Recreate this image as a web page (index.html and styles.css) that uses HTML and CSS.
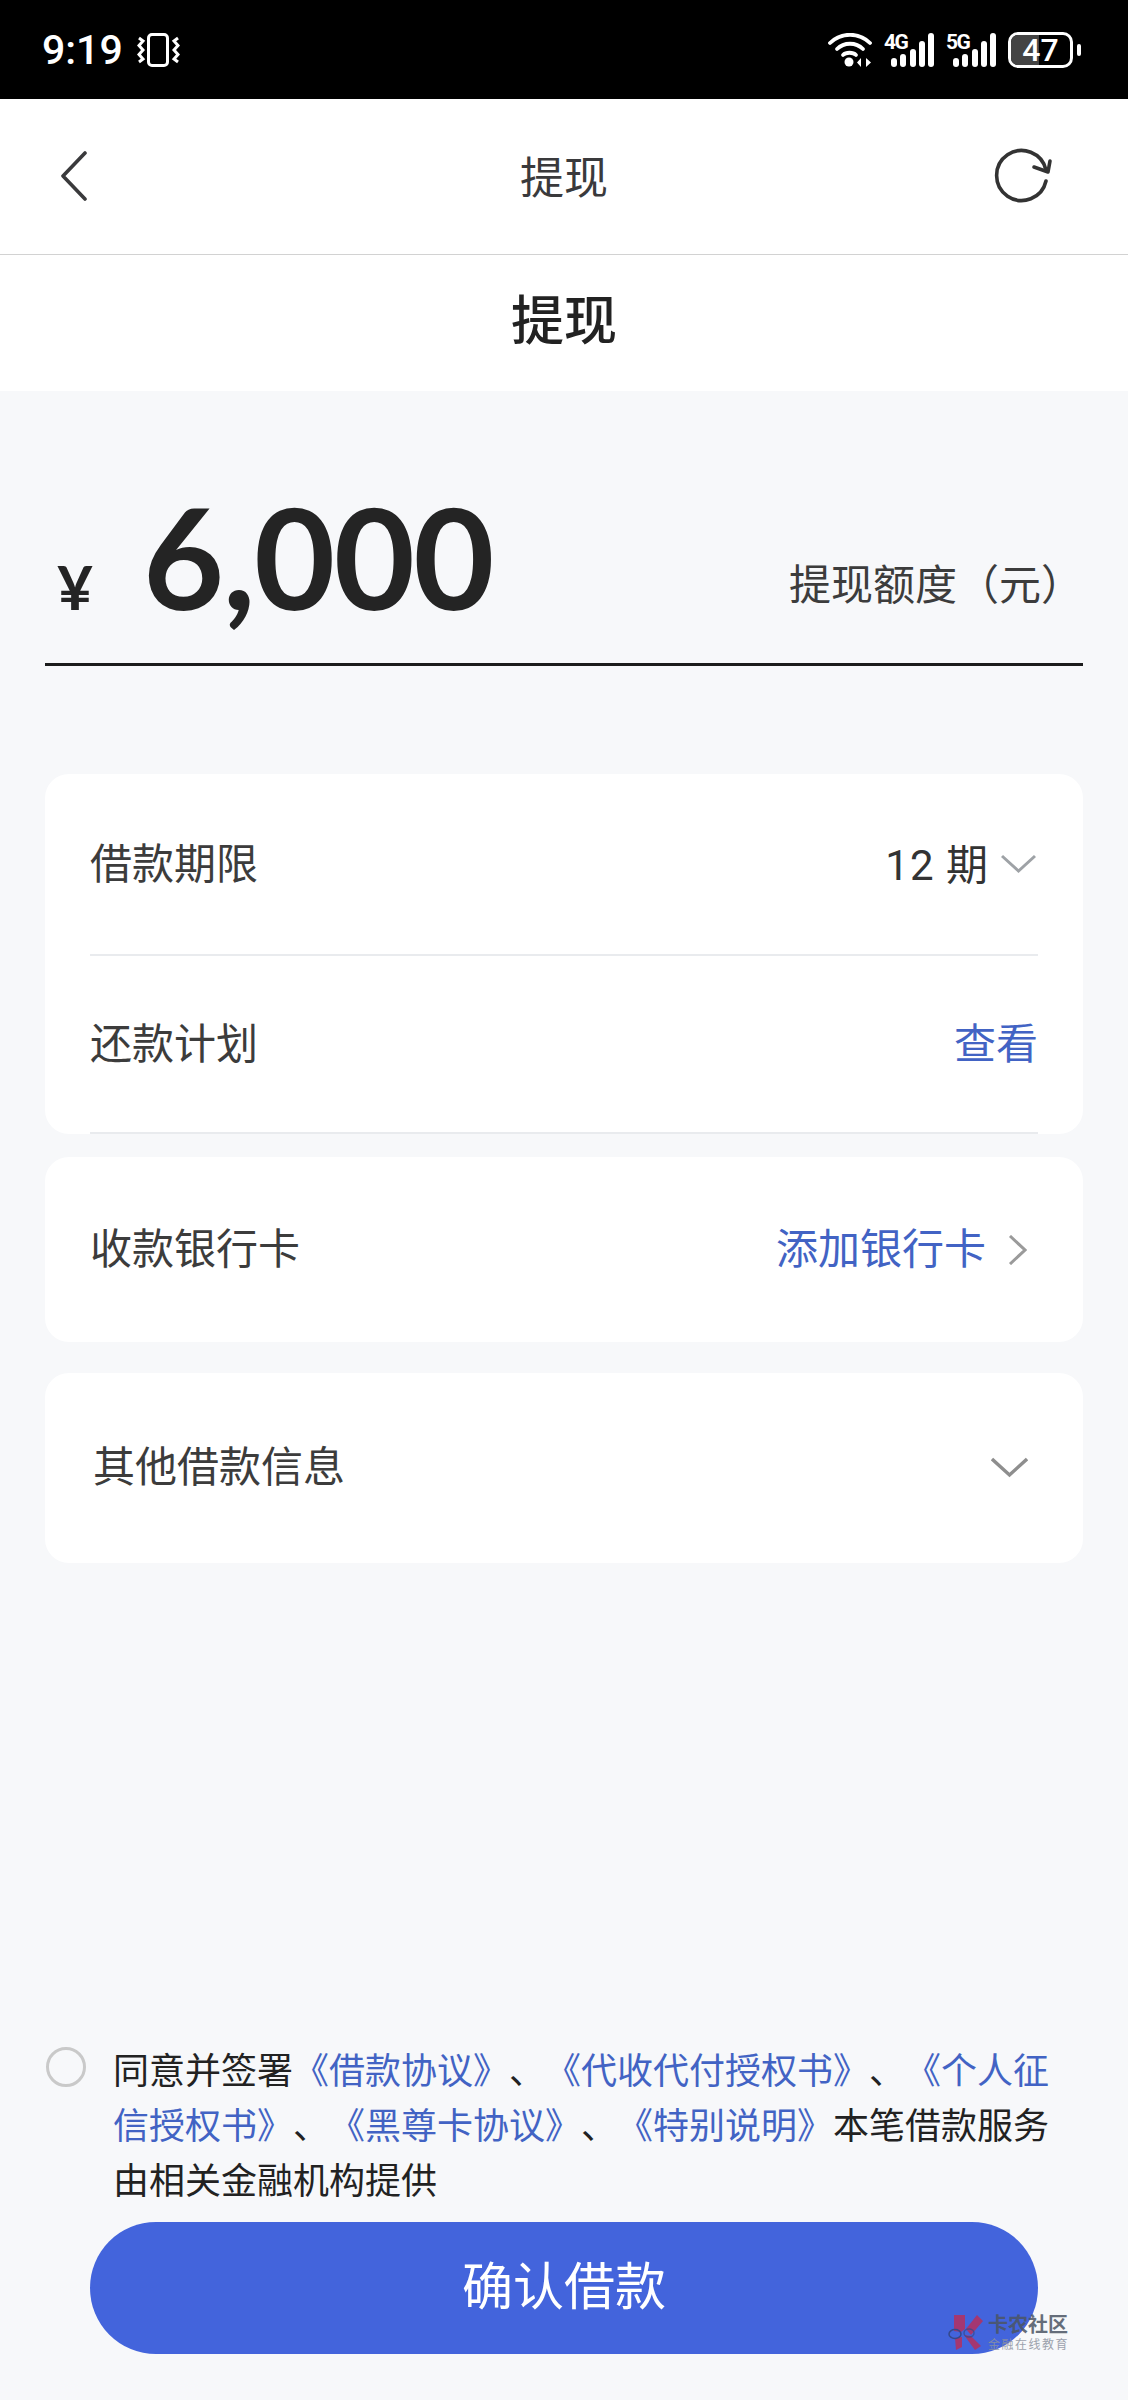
FILE: index.html
```html
<!DOCTYPE html>
<html lang="zh-CN">
<head>
    <meta charset="UTF-8">
    <meta name="viewport" content="width=device-width, initial-scale=1.0">
    <title>提现</title>
    <link rel="stylesheet" href="styles.css">
</head>
<body>
    <div class="page">
        <div class="status-bar">
            <div class="status-left">
                <span class="clock">9:19</span>
                <svg class="vibrate" width="43" height="34" viewBox="0 0 43 34" fill="none" stroke="#fff">
                    <rect x="11.500" y="1.500" width="19" height="31" rx="3.500" stroke-width="3"/>
                    <path d="M2 5l4 3-4 4.500 4 4.500-4 4.500 4 4.500-4 3M41 5l-4 3 4 4.500-4 4.500 4 4.500-4 4.500 4 3" stroke-width="3"/>
                </svg>
            </div>
            <div class="status-right">
                <svg class="wifi" width="44" height="34" viewBox="0 0 44 34" fill="none" stroke="#fff" stroke-width="3.800" stroke-linecap="round">
                    <path d="M2 10C13 -1 31 -1 42 10"/>
                    <path d="M9 16C16 9 28 9 35 16"/>
                    <path d="M15 22C18 19 25 19 28 22"/>
                    <circle cx="21" cy="29" r="4.500" fill="#fff" stroke="none"/>
                    <path d="M33 25l-4 4.500 4 4.500zM38 25v9l5-4.500z" fill="#fff" stroke="none"/>
                </svg>
                <div class="signal">
                    <span class="net">4G</span>
                    <span class="bars"><i class="b1"></i><i class="b2"></i><i class="b3"></i><i class="b4"></i><i class="b5"></i></span>
                </div>
                <div class="signal">
                    <span class="net">5G</span>
                    <span class="bars"><i class="b1"></i><i class="b2"></i><i class="b3"></i><i class="b4"></i><i class="b5"></i></span>
                </div>
                <div class="battery">
                    <div class="battery-body"><div class="battery-fill"></div><span class="battery-num">47</span></div>
                    <div class="battery-nub"></div>
                </div>
            </div>
        </div>

        <div class="nav">
            <svg class="nav-back" width="28" height="50" viewBox="0 0 28 50" fill="none" stroke="#3a3a3c" stroke-width="3.600" stroke-linecap="round" stroke-linejoin="round">
                <path d="M25 2L3 25l22 23"/>
            </svg>
            <span class="nav-title">提现</span>
            <svg class="nav-refresh" width="64" height="58" viewBox="0 0 64 58" fill="none" stroke="#333" stroke-width="3.600" stroke-linecap="round" stroke-linejoin="round">
                <path d="M56 34A25 25 0 1 1 56 23"/>
                <path d="M44 20l14 5 2-11"/>
            </svg>
        </div>

        <div class="page-title">提现</div>

        <div class="amount-row">
            <div class="amount">
                <span class="yen">¥</span>
                <span class="amount-num">6,000</span>
            </div>
            <span class="amount-label">提现额度（元）</span>
        </div>

        <div class="card card-term">
            <div class="row row-term">
                <span class="row-label">借款期限</span>
                <span class="row-right">
                    <span class="term-value">12 期</span>
                    <svg class="chevron" width="35" height="20" viewBox="0 0 35 20" fill="none" stroke="#9ea2a6" stroke-width="3">
                        <path d="M1 2l16.500 15L34 2"/>
                    </svg>
                </span>
            </div>
            <div class="row row-plan">
                <span class="row-label">还款计划</span>
                <span class="row-label link">查看</span>
            </div>
        </div>

        <div class="card card-bank">
            <div class="row">
                <span class="row-label">收款银行卡</span>
                <span class="row-right">
                    <span class="row-label link">添加银行卡</span>
                    <svg class="chevron-right" width="19" height="30" viewBox="0 0 19 30" fill="none" stroke="#9a9a9a" stroke-width="3">
                        <path d="M2 1l15 14L2 29"/>
                    </svg>
                </span>
            </div>
        </div>

        <div class="card card-other">
            <div class="row row-other">
                <span class="row-label">其他借款信息</span>
                <svg class="chevron-other" width="37" height="21" viewBox="0 0 37 21" fill="none" stroke="#8e8e8e" stroke-width="3.400">
                    <path d="M1 2l17.500 16L36 2"/>
                </svg>
            </div>
        </div>

        <div class="spacer"></div>

        <div class="agree">
            <span class="radio"></span>
            <p class="agree-text">同意并签署<a>《借款协议》</a>、<a>《代收代付授权书》</a>、<a>《个人征</a><a>信授权书》</a>、<a>《黑尊卡协议》</a>、<a>《特别说明》</a><span>本笔借款服务</span><span>由相关金融机构提供</span></p>
        </div>

        <button class="submit">确认借款</button>

        <div class="watermark">
            <svg width="36" height="36" viewBox="0 0 36 36">
                <path d="M6 1h11v14l-4 3-7-1zM18 15L29 1l6 6-12 14zM16 21l7 1 10 10-6 4zM7 24l7-1v10l-6 3z" fill="#b5305f"/>
                <ellipse cx="7" cy="20" rx="6" ry="4.500" fill="none" stroke="#34447c" stroke-width="1.500"/>
                <ellipse cx="21" cy="19" rx="5" ry="4" fill="none" stroke="#34447c" stroke-width="1.500" opacity=".7"/>
            </svg>
            <div class="watermark-text">
                <span class="wm-name">卡农社区</span>
                <span class="wm-sub">金融在线教育</span>
            </div>
        </div>
    </div>
</body>
</html>
```

FILE: styles.css
```css
* {
    box-sizing: border-box;
}
body {
    margin: 0;
    font-family: "Noto Sans CJK SC", "Noto Sans", sans-serif;
    color: #333;
    background: #f7f8fa;
}
.page {
    position: relative;
    width: 1128px;
    height: 2400px;
    display: flex;
    flex-direction: column;
    overflow: hidden;
}

/* status bar */
.status-bar {
    height: 99px;
    background: #000;
    color: #fff;
    display: flex;
    justify-content: space-between;
    align-items: center;
    padding: 0 47px 0 42px;
}
.status-left {
    display: flex;
    align-items: center;
    gap: 14px;
}
.clock {
    font-family: Roboto, sans-serif;
    font-weight: 500;
    font-size: 41px;
    line-height: 50px;
}
.status-right {
    display: flex;
    align-items: center;
    gap: 12px;
}
.signal {
    position: relative;
    width: 50px;
    height: 34px;
}
.net {
    position: absolute;
    left: 0;
    top: -1px;
    font-family: Roboto, sans-serif;
    font-weight: 700;
    font-size: 21px;
    line-height: 20px;
    letter-spacing: -1.500px;
}
.bars {
    position: absolute;
    left: 7px;
    right: 0;
    bottom: 0;
    height: 34px;
    display: flex;
    align-items: flex-end;
    justify-content: space-between;
}
.bars i {
    display: block;
    width: 6px;
    background: #fff;
    border-radius: 3px;
}
.bars .b1 { height: 9px; }
.bars .b2 { height: 13px; }
.bars .b3 { height: 18px; }
.bars .b4 { height: 26px; }
.bars .b5 { height: 34px; }
.battery {
    display: flex;
    align-items: center;
    gap: 4px;
}
.battery-body {
    position: relative;
    width: 65px;
    height: 36px;
    border: 3px solid #fff;
    border-radius: 10px;
    overflow: hidden;
    text-align: center;
}
.battery-fill {
    position: absolute;
    left: 0;
    top: 0;
    bottom: 0;
    width: 47%;
    background: #444;
}
.battery-num {
    position: relative;
    font-family: Roboto, sans-serif;
    font-weight: 500;
    font-size: 32px;
    line-height: 31px;
    display: block;
}
.battery-nub {
    width: 4px;
    height: 12px;
    background: #fff;
    border-radius: 2px;
}

/* nav */
.nav {
    position: relative;
    height: 156px;
    background: #fff;
    border-bottom: 1px solid #d2d2d2;
    display: flex;
    justify-content: space-between;
    align-items: center;
    padding: 0 74px 1px 60px;
}
.nav-title {
    position: absolute;
    left: 0;
    right: 0;
    top: 46px;
    text-align: center;
    font-size: 44px;
    line-height: 60px;
    color: #3a3a3c;
}
.page-title {
    height: 136px;
    background: #fff;
    text-align: center;
    font-size: 53px;
    font-weight: 500;
    line-height: 124px;
    color: #222;
}

/* amount */
.amount-row {
    height: 275px;
    margin: 0 45px;
    border-bottom: 3px solid #1c1c1c;
    display: flex;
    justify-content: space-between;
    align-items: flex-end;
    padding: 0 0 27px 12px;
}
.amount {
    display: flex;
    align-items: baseline;
    gap: 50px;
    color: #242424;
}
.yen {
    font-family: Lato, sans-serif;
    font-weight: 700;
    font-size: 62px;
    line-height: 100px;
}
.amount-num {
    font-family: Lato, sans-serif;
    font-weight: 700;
    font-size: 140px;
    line-height: 100px;
    letter-spacing: -1.500px;
}
.amount-label {
    font-size: 42px;
    line-height: 60px;
    margin-bottom: 24px;
    color: #3c3c3c;
}

/* cards */
.card {
    margin: 0 45px;
    background: #fff;
    border-radius: 24px;
    font-size: 42px;
    color: #3c3c3c;
}
.card-term {
    margin-top: 108px;
    height: 360px;
}
.card-bank {
    margin-top: 23px;
    height: 185px;
}
.card-other {
    margin-top: 31px;
    height: 190px;
}
.row {
    height: 100%;
    margin: 0 45px;
    display: flex;
    justify-content: space-between;
    align-items: center;
}
.row-label {
    margin-bottom: 8px;
}
.row-term,
.row-plan {
    border-bottom: 2px solid #e9ebee;
}
.row-term {
    height: 182px;
}
.row-plan {
    height: 178px;
}
.row-other {
    margin: 0 55px 0 48px;
    padding-bottom: 2px;
}
.row-right {
    display: flex;
    align-items: center;
}
.term-value {
    margin-bottom: 6px;
    font-family: Roboto, "Noto Sans CJK SC", sans-serif;
    letter-spacing: 1px;
    color: #333;
}
.chevron {
    margin-left: 12px;
    margin-right: 2px;
}
.chevron-right {
    margin-left: 22px;
    margin-right: 11px;
}
.chevron-other {
    margin-left: 20px;
}
.link {
    color: #4263c4;
}

/* agreement */
.spacer {
    flex: 1;
}
.agree {
    display: flex;
    align-items: flex-start;
    padding-left: 46px;
    gap: 27px;
}
.radio {
    flex: none;
    width: 40px;
    height: 40px;
    margin-top: 6px;
    border: 3px solid #c9c9c9;
    border-radius: 50%;
}
.agree-text {
    width: 942px;
    margin: 0;
    font-size: 36px;
    line-height: 55px;
    color: #222;
    text-spacing-trim: space-all;
}
.agree-text a {
    color: #4263c4;
}
.submit {
    display: block;
    width: 948px;
    height: 132px;
    margin: 16px 0 46px 90px;
    padding: 0 0 10px;
    border: none;
    border-radius: 66px;
    background: #4364dc;
    color: #fff;
    font-family: inherit;
    font-size: 51px;
}

/* watermark sits over the button */
.watermark {
    position: absolute;
    left: 948px;
    top: 2312px;
    display: flex;
    align-items: center;
    gap: 4px;
    opacity: .85;
}
.watermark-text {
    display: flex;
    flex-direction: column;
}
.wm-name {
    font-size: 20px;
    line-height: 24px;
    font-weight: 700;
    color: #4c5564;
}
.wm-sub {
    font-size: 12px;
    line-height: 16px;
    letter-spacing: 1.500px;
    color: #8d93a0;
}
```
